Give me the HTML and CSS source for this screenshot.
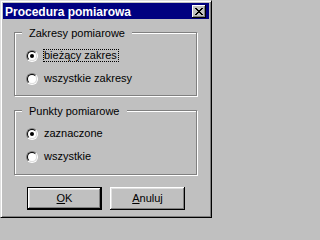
FILE: index.html
```html
<!DOCTYPE html>
<html lang="pl">
<head>
<meta charset="utf-8">
<title>Procedura pomiarowa</title>
<link rel="stylesheet" href="styles.css">
</head>
<body>
<div class="window">
  <div class="titlebar">
    <span class="title">Procedura pomiarowa</span>
    <span class="close">
      <svg width="8" height="7" viewBox="0 0 8 7" shape-rendering="crispEdges"><path d="M0 0h2v1H0zM6 0h2v1H6zM1 1h2v1H1zM5 1h2v1H5zM2 2h4v1H2zM3 3h2v1H3zM2 4h4v1H2zM1 5h2v1H1zM5 5h2v1H5zM0 6h2v1H0zM6 6h2v1H6z" fill="#000"/></svg>
    </span>
  </div>
  <div class="content">
    <div class="group">
      <div class="group-title">Zakresy pomiarowe</div>
      <div class="options">
        <div class="option"><span class="radio"><span class="radio-inner"><span class="dot"></span></span></span><span class="label focus">bieżący zakres</span></div>
        <div class="option"><span class="radio"><span class="radio-inner"></span></span><span class="label">wszystkie zakresy</span></div>
      </div>
    </div>
    <div class="group group-second">
      <div class="group-title">Punkty pomiarowe</div>
      <div class="options">
        <div class="option"><span class="radio"><span class="radio-inner"><span class="dot"></span></span></span><span class="label">zaznaczone</span></div>
        <div class="option"><span class="radio"><span class="radio-inner"></span></span><span class="label">wszystkie</span></div>
      </div>
    </div>
    <div class="buttons">
      <div class="btn btn-default"><div class="btn-face"><u>O</u>K</div></div>
      <div class="btn"><div class="btn-face"><u>A</u>nuluj</div></div>
    </div>
  </div>
</div>
</body>
</html>
```
FILE: styles.css
```css
html, body {
  margin: 0;
  padding: 0;
  background: #c0c0c0;
}

.window {
  width: 212px;
  height: 218px;
  box-sizing: border-box;
  background: #c0c0c0;
  border: 1px solid;
  border-color: #dfdfdf #000 #000 #dfdfdf;
  box-shadow: inset 1px 1px 0 #fff, inset -1px -1px 0 #808080;
  padding: 2px;
  font-family: "Liberation Sans", Arial, sans-serif;
  font-size: 11px;
  color: #000;
  display: flex;
  flex-direction: column;
}

.titlebar {
  height: 16px;
  background: #000080;
  display: flex;
  align-items: flex-start;
  justify-content: space-between;
  flex: none;
}

.title {
  color: #fff;
  font-weight: bold;
  font-size: 12px;
  line-height: 14px;
  padding: 2px 0 0 2px;
  white-space: nowrap;
}

.close {
  width: 14px;
  height: 13px;
  box-sizing: border-box;
  margin: 2px 3px 0 0;
  background: #c0c0c0;
  box-shadow: inset -1px -1px 0 #000, inset 1px 1px 0 #fff, inset -2px -2px 0 #808080;
  display: flex;
  align-items: center;
  justify-content: center;
  padding: 0 1px 1px 0;
}

.close svg {
  display: block;
}

.content {
  display: flex;
  flex-direction: column;
}

.group {
  margin: 13px 12px 0 11px;
  border: 1px solid #808080;
  box-shadow: inset 1px 1px 0 #fff, 1px 1px 0 #fff;
  padding: 0 0 10px 11px;
}

.group-second {
  margin-top: 14px;
  padding-bottom: 11px;
}

.group-title {
  width: fit-content;
  margin: -6px 0 0 -4px;
  padding: 0 7px;
  line-height: 13px;
  height: 13px;
  background: #c0c0c0;
  white-space: nowrap;
}

.options {
  display: flex;
  flex-direction: column;
  gap: 10px;
  margin-top: 9px;
}

.option {
  display: flex;
  align-items: flex-start;
  height: 13px;
}

.radio {
  flex: none;
  width: 12px;
  height: 12px;
  box-sizing: border-box;
  margin-top: 1px;
  border-radius: 50%;
  border: 1px solid;
  border-color: #808080 #fff #fff #808080;
}

.radio-inner {
  display: flex;
  align-items: center;
  justify-content: center;
  width: 100%;
  height: 100%;
  box-sizing: border-box;
  border-radius: 50%;
  border: 1px solid;
  border-color: #000 #dfdfdf #dfdfdf #000;
  background: #fff;
}

.dot {
  width: 4px;
  height: 4px;
  border-radius: 50%;
  background: #000;
}

.label {
  margin-left: 5px;
  padding: 0 1px 0 0;
  border: 1px solid transparent;
  line-height: 11px;
  white-space: nowrap;
}

.label.focus {
  border: 1px dotted #000;
}

.buttons {
  display: flex;
  gap: 8px;
  margin: 12px 0 0 24px;
}

.btn {
  width: 75px;
  height: 23px;
  box-sizing: border-box;
  box-shadow: inset -1px -1px 0 #000, inset 1px 1px 0 #fff, inset -2px -2px 0 #808080, inset 2px 2px 0 #dfdfdf;
  display: flex;
}

.btn-face {
  flex: 1;
  display: flex;
  align-items: center;
  justify-content: center;
  padding-bottom: 1px;
}

.btn-default {
  border: 1px solid #000;
  box-shadow: none;
}

.btn-default .btn-face {
  box-shadow: inset -1px -1px 0 #000, inset 1px 1px 0 #fff, inset -2px -2px 0 #808080, inset 2px 2px 0 #dfdfdf;
}

u {
  text-decoration: underline;
  text-underline-offset: 1px;
}
```
